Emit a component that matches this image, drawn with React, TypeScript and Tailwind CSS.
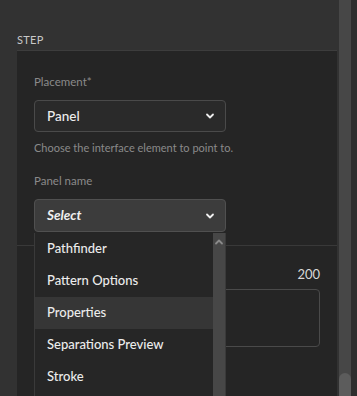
import React from 'react';

const Chevron = ({ up = false }: { up?: boolean }) => (
  <svg width="10" height="10" viewBox="0 0 10 10" className={up ? 'rotate-180' : ''}>
    <path d="M2 3.5 L5 6.5 L8 3.5" fill="none" stroke="currentColor" strokeWidth="1.8" strokeLinecap="round" strokeLinejoin="round" />
  </svg>
);

const items = ['Pathfinder', 'Pattern Options', 'Properties', 'Separations Preview', 'Stroke'];

export default function App() {
  return (
    <div className="h-[396px] w-[357px] overflow-hidden bg-[#323232] flex font-['Lato',sans-serif]">
      {/* Main column */}
      <div className="flex-1 pl-[17px] pr-[2px] pt-[33px]">
        <div className="text-[11px] tracking-wide text-[#c8c8c8] leading-[14px]">STEP</div>

        <div className="mt-[3px] bg-[#252525] border-t border-[#3d3d3d] h-[400px]">
          {/* Step section */}
          <div className="px-[17px] pt-[23px] pb-[13px] border-b border-[#393939]">
            <div className="text-[11.5px] text-[#8a8a8a] leading-[16px]">Placement*</div>
            <div className="mt-[10px] w-[192px] h-[32px] rounded-[4px] border border-[#4a4a4a] bg-[#2a2a2a] flex items-center justify-between pl-[12px] pr-[10px] text-[#ededed]">
              <span className="text-[13.5px] font-medium">Panel</span>
              <Chevron />
            </div>
            <div className="mt-[8px] text-[11px] text-[#8a8a8a] leading-[16px]">Choose the interface element to point to.</div>

            <div className="mt-[17px] text-[11.5px] text-[#8a8a8a] leading-[16px]">Panel name</div>
            <div className="relative mt-[10px] w-[192px]">
              <div className="h-[33px] rounded-[4px] border border-[#505050] bg-[#3c3c3c] flex items-center justify-between pl-[12px] pr-[10px] text-[#f0f0f0]">
                <span className="text-[13.5px] italic font-bold">Select</span>
                <Chevron />
              </div>

              {/* Dropdown menu */}
              <div className="absolute left-0 top-[34px] z-10 w-[192px] h-[170px] bg-[#262626] border-l border-r border-[#3a3a3a] flex">
                <div className="flex-1 flex flex-col">
                  {items.map((it) => (
                    <div
                      key={it}
                      className={`h-[32px] flex items-center pl-[12px] text-[13px] font-medium text-[#ececec] ${it === 'Properties' ? 'bg-[#363636]' : ''}`}
                    >
                      {it}
                    </div>
                  ))}
                </div>
                <div className="w-[12px] bg-[#474747] flex justify-center pt-[4px] text-[#8a8a8a]">
                  <Chevron up />
                </div>
              </div>
            </div>
          </div>

          {/* Next section */}
          <div className="px-[17px] pt-[19px]">
            <div className="flex justify-end text-[13px] leading-[18px] text-[#d8d8d8]">200</div>
            <div className="mt-[6px] h-[58px] rounded-[4px] border border-[#4a4a4a] bg-[#252525]" />
          </div>
        </div>
      </div>

      {/* Page scrollbar */}
      <div className="w-[12px] bg-[#474747] flex flex-col justify-end">
        <div className="h-[23px] rounded-t-full bg-[#5c5c5c]" />
      </div>
      <div className="w-[6px] bg-[#2e2e2e]" />
    </div>
  );
}
